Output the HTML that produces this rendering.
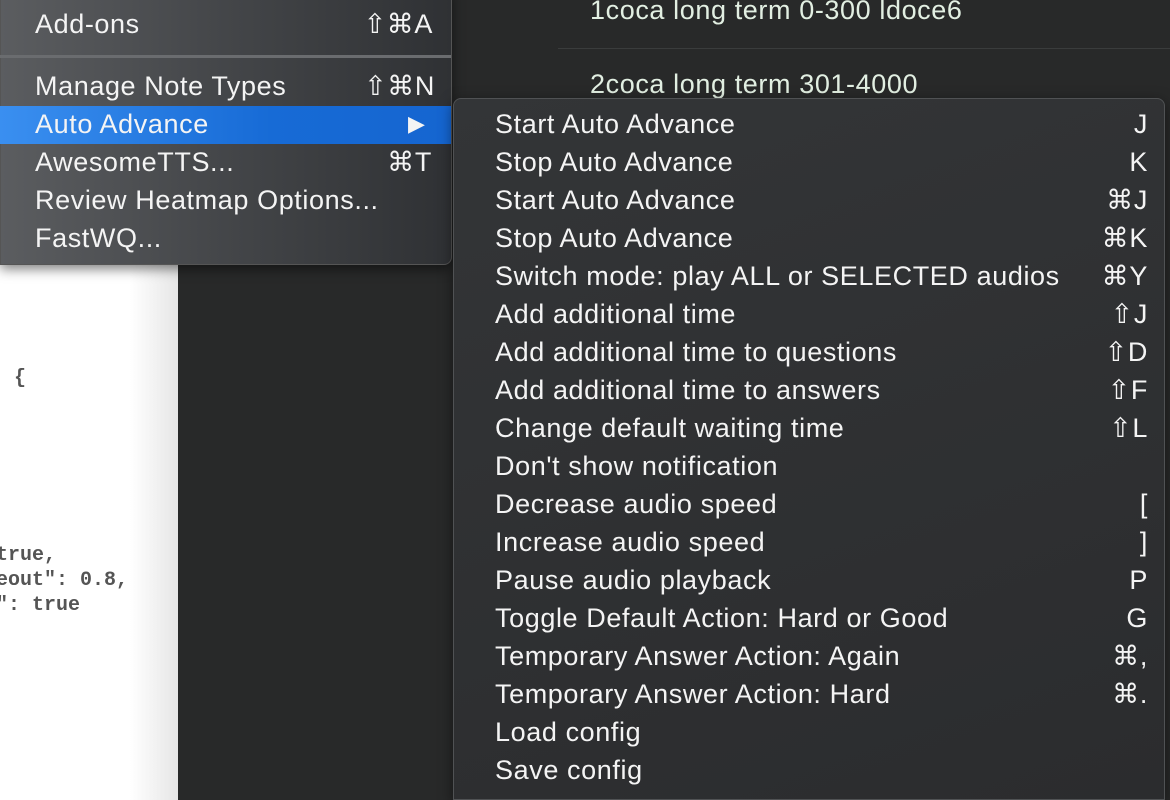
<!DOCTYPE html>
<html><head><meta charset="utf-8"><style>
*{margin:0;padding:0;box-sizing:border-box}
body{width:1170px;height:800px;overflow:hidden;background:#282929;font-family:"Liberation Sans","DejaVu Sans",sans-serif;position:relative}
.white{position:absolute;left:0;top:260px;width:178px;height:540px;background:linear-gradient(90deg,#fff 0,#fff 130px,#e6e6e6 178px)}
.code{position:absolute;font-family:"Liberation Mono",monospace;font-size:20px;line-height:25px;color:#555;font-weight:bold;white-space:pre}
.list{position:absolute;left:590px;font-size:27px;letter-spacing:0.6px;color:#e2efe2}
.sep{position:absolute;left:558px;right:0;top:48px;height:1px;background:#3a3c3c}
.menu{position:absolute;left:0;top:-10px;width:452px;height:275px;background:linear-gradient(90deg,#5b5d60 0,#46484b 45%,#2f3134 100%);border-radius:0 0 8px 0;border:1px solid #555;box-shadow:0 4px 12px rgba(0,0,0,.5)}
.sub{position:absolute;left:453px;top:98px;width:712px;height:702px;background:linear-gradient(160deg,#333537,#2b2c2e);border:1px solid #505254;border-radius:8px 8px 0 0;box-shadow:0 4px 14px rgba(0,0,0,.5)}
.it{position:absolute;height:38px;line-height:38px;font-size:27px;letter-spacing:0.6px;color:#f4f4f4}
.r{position:absolute;text-align:right}
</style></head><body>
<div class="white"></div>
<div class="code" style="left:14px;top:366px">{</div>
<div class="code" style="left:-4px;top:543px">true,
eout": 0.8,
": true</div>
<div class="list" style="top:-5px">1coca long term 0-300 ldoce6</div>
<div class="sep"></div>
<div class="list" style="top:69px">2coca long term 301-4000</div>

<div class="menu"></div>
<div style="position:absolute;left:0;top:55px;width:451px;height:3px;background:#6a6c6f"></div>
<div style="position:absolute;left:0;top:106px;width:451px;height:38px;background:linear-gradient(90deg,#3a8ff0,#176bd6 60%,#1565d0)"></div>
<div class="it" style="left:35px;top:5px">Add-ons</div><div class="it r" style="right:737px;top:5px">⇧⌘A</div>
<div class="it" style="left:35px;top:67px">Manage Note Types</div><div class="it r" style="right:735px;top:67px">⇧⌘N</div>
<div class="it" style="left:35px;top:105px">Auto Advance</div><div class="it" style="left:408px;top:105px;font-size:22px">▶</div>
<div class="it" style="left:35px;top:143px">AwesomeTTS...</div><div class="it r" style="right:738px;top:143px">⌘T</div>
<div class="it" style="left:35px;top:181px">Review Heatmap Options...</div>
<div class="it" style="left:35px;top:219px">FastWQ...</div>

<div class="sub"></div>
<div id="s"></div>
<script>
var rows=[["Start Auto Advance","J"],["Stop Auto Advance","K"],["Start Auto Advance","⌘J"],["Stop Auto Advance","⌘K"],["Switch mode: play ALL or SELECTED audios","⌘Y"],["Add additional time","⇧J"],["Add additional time to questions","⇧D"],["Add additional time to answers","⇧F"],["Change default waiting time","⇧L"],["Don't show notification",""],["Decrease audio speed","["],["Increase audio speed","]"],["Pause audio playback","P"],["Toggle Default Action: Hard or Good","G"],["Temporary Answer Action: Again","⌘,"],["Temporary Answer Action: Hard","⌘."],["Load config",""],["Save config",""]];
var h="";rows.forEach(function(r,i){var t=105+i*38;h+='<div class="it" style="left:495px;top:'+t+'px">'+r[0]+'</div><div class="it r" style="right:22px;top:'+t+'px">'+r[1]+'</div>';});
document.getElementById("s").innerHTML=h;
</script>
</body></html>
